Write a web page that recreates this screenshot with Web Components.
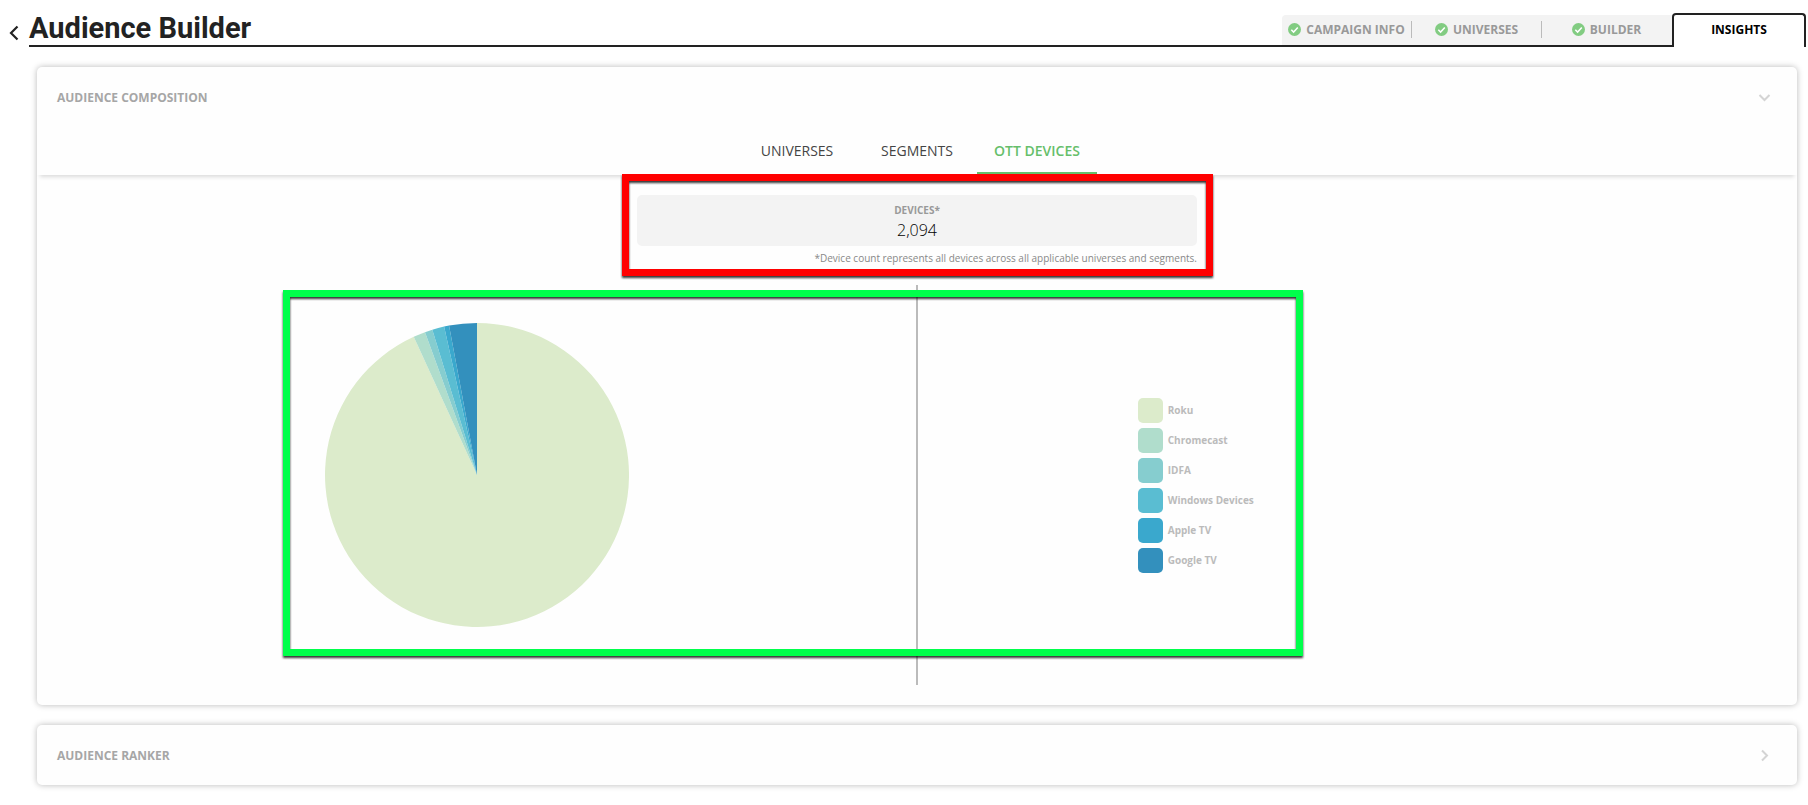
<!DOCTYPE html>
<html lang="en">
<head>
<meta charset="utf-8">
<title>Audience Builder</title>
<style>
  body { margin: 0; background: #fff; font-family: "Open Sans", "Noto Sans", sans-serif; color: #222; }
</style>
</head>
<body>
<audience-app></audience-app>

<script>
function define(name, markup, setup) {
  const template = document.createElement('template');
  template.innerHTML = markup;
  customElements.define(name, class extends HTMLElement {
    constructor() {
      super();
      this.attachShadow({ mode: 'open' }).append(template.content.cloneNode(true));
    }
    connectedCallback() { if (setup) setup(this, this.shadowRoot); }
  });
}

/* A finished step of the wizard */
define('wizard-step', `
  <style>
    :host { display: flex; box-sizing: border-box; flex: 0 0 130px; height: 30px; padding-top: 6px; align-items: flex-start; background: #f3f3f3; }
    a { flex: 1; display: flex; align-items: center; justify-content: center; gap: 5px; height: 17px;
        border-right: 1px solid #bbb; color: #999; text-decoration: none; font-size: 12px; line-height: 17px; font-weight: 700; white-space: nowrap; }
    :host(:first-of-type) { border-top-left-radius: 4px; }
    :host(:last-of-type) a { border-color: transparent; }
    svg { flex: none; display: block; }
  </style>
  <a href="#"><svg width="13" height="13" viewBox="0 0 13 13" aria-hidden="true"><circle cx="6.500" cy="6.500" r="6.500" fill="#82cc82"/><path d="M3.300 6.800l2.300 2.300 4.200-4.600" fill="none" stroke="#fff" stroke-width="1.500"/></svg><slot></slot></a>
`);

define('page-header', `
  <style>
    :host { display: flex; align-items: flex-end; height: 47px; padding-right: 2px; }
    .back { flex: none; width: 29px; height: 28px; margin: 0; padding: 0 0 0 9px; border: 0; background: none; display: flex; align-items: center; }
    .bar { flex: 1; display: flex; align-items: flex-end; justify-content: space-between; border-bottom: 2px solid #222; }
    h1 { margin: 0; font: 700 29px/34px Roboto, sans-serif; color: #222; white-space: nowrap; }
    nav { display: flex; }
    .current { box-sizing: border-box; flex: 0 0 134px; height: 34px; border: 2px solid #222; border-bottom: 0; border-radius: 4px 4px 0 0;
               color: #000; text-decoration: none; text-align: center; font-size: 12px; line-height: 30px; font-weight: 700; }
  </style>
  <button class="back" aria-label="Back"><svg width="10" height="16" viewBox="0 0 10 16"><path d="M8.500 1.500L2 8l6.500 6.500" fill="none" stroke="#222" stroke-width="2.200"/></svg></button>
  <div class="bar">
    <h1><slot></slot></h1>
    <nav><wizard-step>CAMPAIGN INFO</wizard-step><wizard-step>UNIVERSES</wizard-step><wizard-step>BUILDER</wizard-step></nav>
  </div>
  <a class="current" href="#" aria-current="step">INSIGHTS</a>
`);

define('fold-card', `
  <style>
    :host { display: block; background: #fefefe; border-radius: 5px; box-shadow: 0 0 6px rgba(0,0,0,.28); }
    h2 { margin: 0; }
    button { width: 100%; height: 60px; padding: 1px 26px 0 20px; border: 0; background: none; display: flex; align-items: center; justify-content: space-between;
             font: 700 12px/18px "Open Sans", sans-serif; color: #a6a6a6; }
    svg { transform: rotate(-90deg); }
    :host([open]) svg { transform: none; }
  </style>
  <h2><button><slot name="title"></slot><svg width="13" height="13" viewBox="0 0 13 13" aria-hidden="true"><path d="M1.500 4l5 5 5-5" fill="none" stroke="#d4d4d4" stroke-width="2"/></svg></button></h2>
  <slot></slot>
`);

define('tab-item', `
  <style>
    :host { display: block; flex: 0 0 120px; }
    button { width: 100%; height: 48px; padding: 2px 0 0; border: 0; border-bottom: 3px solid transparent; background: none; font: 400 14px/20px "Open Sans", sans-serif; color: #444; }
    :host([selected]) button { color: #66bf6b; border-color: #66bf6b; font-weight: 600; }
  </style>
  <button role="tab"><slot></slot></button>
`, (host, root) => root.querySelector('button').setAttribute('aria-selected', host.hasAttribute('selected')));

define('tab-strip', `
  <style>:host { display: flex; justify-content: center; box-shadow: 0 5px 4px -3px rgba(0,0,0,.14); }</style>
  <slot></slot>
`);

/* Coloured frame that calls out a region */
define('callout-frame', `
  <style>
    :host { position: absolute; box-sizing: border-box; pointer-events: none; border: 7px solid var(--frame);
            filter: drop-shadow(0 2px 1px rgba(0,0,0,.8)); }
  </style>
`);

define('device-count', `
  <style>
    :host { display: block; position: relative; width: 560px; margin: 0 auto; }
    .box { background: #f3f3f3; border-radius: 5px; height: 51px; text-align: center; }
    .label { padding-top: 8px; font-size: 10px; line-height: 14px; font-weight: 700; color: #999; }
    .value { font-size: 16px; line-height: 26px; font-weight: 300; color: #000; }
    .note { margin: 0; padding: 4px 0 1px; text-align: right; font-size: 10px; line-height: 16px; color: #888; white-space: nowrap; }
    callout-frame { --frame: #f00; inset: -21px -16px -9px -15px; }
  </style>
  <div class="box"><div class="label"><slot name="label"></slot></div><div class="value"><slot name="value"></slot></div></div>
  <p class="note"><slot name="note"></slot></p>
  <callout-frame></callout-frame>
`);

const DEVICES = [
  ['Roku', 335.4, '#dcebcb'],
  ['Chromecast', 4.6, '#b0ddcc'],
  ['IDFA', 2.9, '#86cdcf'],
  ['Windows Devices', 4.6, '#5abdd2'],
  ['Apple TV', 1.9, '#3aa8cd'],
  ['Google TV', 10.6, '#3390bd']
];

define('pie-chart', `
  <style>:host { display: block; } svg { display: block; }</style>
  <svg width="304" height="304" viewBox="-152 -152 304 304" role="img" aria-label="Devices by type"></svg>
`, (host, root) => {
  let angle = 0;
  const point = a => (152 * Math.sin(a * Math.PI / 180)).toFixed(2) + ' ' + (-152 * Math.cos(a * Math.PI / 180)).toFixed(2);
  root.querySelector('svg').innerHTML = DEVICES.map(([, size, color]) => {
    const start = angle;
    angle += size;
    return `<path fill="${color}" d="M0 0L${point(start)}A152 152 0 ${size > 180 ? 1 : 0} 1 ${point(angle)}Z"/>`;
  }).join('');
});

define('chart-legend', `
  <style>
    :host { display: block; }
    ul { margin: 0; padding: 0; list-style: none; display: grid; gap: 5px; }
    li { display: flex; align-items: center; gap: 5px; font-size: 10px; line-height: 25px; font-weight: 700; color: #bbb; }
    i { width: 25px; height: 25px; border-radius: 5px; }
  </style>
  <ul></ul>
`, (host, root) => {
  root.querySelector('ul').innerHTML = DEVICES.map(([name, , color]) => `<li><i style="background:${color}"></i>${name}</li>`).join('');
});

define('device-breakdown', `
  <style>
    :host { display: grid; grid-template-columns: 1fr 2px 1fr; height: 400px; position: relative; }
    .chart { display: flex; justify-content: center; padding-top: 38px; }
    .divider { background: #bbb; }
    .legend { padding: 113px 0 0 25%; }
    callout-frame { --frame: #00ff4b; left: calc(50% - 634px); top: 5px; width: 1020px; height: 366px; }
  </style>
  <div class="chart"><pie-chart></pie-chart></div>
  <div class="divider"></div>
  <div class="legend"><chart-legend></chart-legend></div>
  <callout-frame></callout-frame>
`);

define('audience-app', `
  <style>
    main { display: grid; gap: 20px; padding: 20px 11px 20px 37px; }
    .body { display: grid; gap: 18px; padding: 20px 0; }
  </style>
  <page-header>Audience Builder</page-header>
  <main>
    <fold-card open>
      <span slot="title">AUDIENCE COMPOSITION</span>
      <tab-strip role="tablist"><tab-item>UNIVERSES</tab-item><tab-item>SEGMENTS</tab-item><tab-item selected>OTT DEVICES</tab-item></tab-strip>
      <div class="body">
        <device-count>
          <span slot="label">DEVICES*</span>
          <span slot="value">2,094</span>
          <span slot="note">*Device count represents all devices across all applicable universes and segments.</span>
        </device-count>
        <device-breakdown></device-breakdown>
      </div>
    </fold-card>
    <fold-card><span slot="title">AUDIENCE RANKER</span></fold-card>
  </main>
`);
</script>
</body>
</html>
